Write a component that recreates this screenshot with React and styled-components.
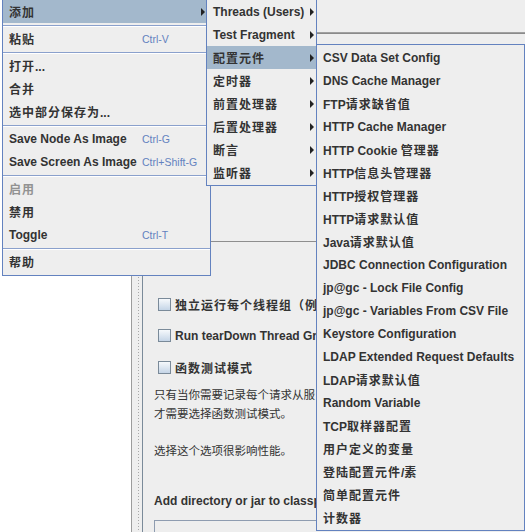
import React from "react";
import styled, { createGlobalStyle } from "styled-components";

const GlobalStyle = createGlobalStyle`
  *, *::before, *::after {
    box-sizing: border-box;
  }
  body {
    margin: 0;
    background: #ffffff;
    font-family: "Liberation Sans", "Noto Sans CJK SC", sans-serif;
    color: #333333;
    overflow: hidden;
  }
`;

const CJK = /([\u2e80-\u9fff\u3000-\u303f\uff00-\uffef]+)/;

function Txt({ children, plain }) {
  return children
    .split(CJK)
    .map((part, i) =>
      i % 2 === 1 ? (
        <Han key={i} $plain={plain}>
          {part}
        </Han>
      ) : (
        part
      )
    );
}

const mainMenu = [
  { label: "添加", sub: true, active: true },
  "sep",
  { label: "粘贴", key: "Ctrl-V" },
  "sep",
  { label: "打开..." },
  { label: "合并" },
  { label: "选中部分保存为..." },
  "sep",
  { label: "Save Node As Image", key: "Ctrl-G" },
  { label: "Save Screen As Image", key: "Ctrl+Shift-G" },
  "sep",
  { label: "启用", disabled: true },
  { label: "禁用" },
  { label: "Toggle", key: "Ctrl-T" },
  "sep",
  { label: "帮助" },
];

const addMenu = [
  { label: "Threads (Users)", sub: true },
  { label: "Test Fragment", sub: true },
  { label: "配置元件", sub: true, active: true },
  { label: "定时器", sub: true },
  { label: "前置处理器", sub: true },
  { label: "后置处理器", sub: true },
  { label: "断言", sub: true },
  { label: "监听器", sub: true },
];

const configMenu = [
  "CSV Data Set Config",
  "DNS Cache Manager",
  "FTP请求缺省值",
  "HTTP Cache Manager",
  "HTTP Cookie 管理器",
  "HTTP信息头管理器",
  "HTTP授权管理器",
  "HTTP请求默认值",
  "Java请求默认值",
  "JDBC Connection Configuration",
  "jp@gc - Lock File Config",
  "jp@gc - Variables From CSV File",
  "Keystore Configuration",
  "LDAP Extended Request Defaults",
  "LDAP请求默认值",
  "Random Variable",
  "TCP取样器配置",
  "用户定义的变量",
  "登陆配置元件/素",
  "简单配置元件",
  "计数器",
].map((label) => ({ label }));

function MenuList({ items, padRight }) {
  return items.map((item, i) =>
    item === "sep" ? (
      <Separator key={i} />
    ) : (
      <Item
        key={i}
        $active={item.active}
        $disabled={item.disabled}
        $padRight={padRight}
      >
        <Label>
          <Txt>{item.label}</Txt>
        </Label>
        {item.key && <Shortcut>{item.key}</Shortcut>}
        {item.sub && <Arrow />}
      </Item>
    )
  );
}

export default function App() {
  return (
    <>
      <GlobalStyle />
      <Screen>
        <Tree />
        <Splitter />
        <Panel>
          <TitleArea />
          <EtchedRule />
          <UpperArea />
          <Options>
            <CheckRow>
              <CheckBox />
              <Txt>独立运行每个线程组（例</Txt>
            </CheckRow>
            <CheckRow>
              <CheckBox />
              Run tearDown Thread Gro
            </CheckRow>
            <CheckRow>
              <CheckBox />
              <Txt>函数测试模式</Txt>
            </CheckRow>
            <Para>
              <Txt plain>只有当你需要记录每个请求从服</Txt>
              <br />
              <Txt plain>才需要选择函数测试模式。</Txt>
              <br />
              <br />
              <Txt plain>选择这个选项很影响性能。</Txt>
            </Para>
            <ClassPath>Add directory or jar to classp</ClassPath>
            <ListBox />
          </Options>
        </Panel>

        <Menu $left={2} $top={-1} $width={209} $pad="0 0 2px 0">
          <MenuList items={mainMenu} padRight={5} />
        </Menu>
        <Menu $left={206} $top={-1} $width={111} $pad="0 0 1px 0">
          <MenuList items={addMenu} padRight={2} />
        </Menu>
        <Menu $left={316} $top={44} $width={209} $pad="1px 0">
          <MenuList items={configMenu} padRight={4} />
        </Menu>
      </Screen>
    </>
  );
}

const Screen = styled.div`
  position: relative;
  width: 525px;
  height: 532px;
  display: flex;
  overflow: hidden;
  background: #ffffff;
`;

const Tree = styled.div`
  width: 131px;
  flex: none;
  background: #ffffff;
`;

const Splitter = styled.div`
  width: 12px;
  flex: none;
  background-color: #eeeeee;
  background-image: radial-gradient(circle, #a8a8a8 0.7px, transparent 1px);
  background-size: 3px 3px;
  background-position: 5px 0;
  background-repeat: repeat-y;
  border-left: 1px solid #9c9c9c;
  border-right: 1px solid #7a8a99;
`;

const Panel = styled.div`
  flex: 1;
  min-width: 0;
  display: flex;
  flex-direction: column;
  background: #eeeeee;
  overflow: hidden;
`;

const TitleArea = styled.div`
  height: 32px;
  flex: none;
`;

const EtchedRule = styled.div`
  height: 2px;
  flex: none;
  border-top: 1px solid #a0a0a0;
  border-bottom: 1px solid #8a8a8a;
`;

const UpperArea = styled.div`
  height: 208px;
  flex: none;
  border-bottom: 1px solid #8e8e8e;
`;

/* the visible part of the options column ends where the config submenu starts */
const Options = styled.div`
  width: 173px;
  flex: none;
  display: flex;
  flex-direction: column;
  align-items: flex-start;
  padding: 46.5px 0 0 11px;
  font-size: 12px;
  overflow: hidden;

  & > * {
    flex: none;
  }
`;

const CheckRow = styled.div`
  height: 31.5px;
  margin-left: 4px;
  display: flex;
  align-items: center;
  gap: 4px;
  font-weight: bold;
  white-space: nowrap;
`;

const CheckBox = styled.span`
  width: 13px;
  height: 13px;
  flex: none;
  border: 1px solid #7a8a99;
  background: linear-gradient(to bottom, #f6f9fc, #c5d5e7);
`;

const Para = styled.p`
  margin: 2px 0 0;
  line-height: 18px;
  font-size: 11.5px;
  white-space: nowrap;
`;

const ClassPath = styled.div`
  margin-top: 31.7px;
  line-height: 18px;
  font-weight: bold;
  white-space: nowrap;
`;

const ListBox = styled.div`
  align-self: stretch;
  margin-top: 10.3px;
  margin-right: -4px;
  height: 40px;
  border: 1px solid #8e9cb0;
  background: #eeeeee;
`;

const Han = styled.span`
  font-family: "Noto Sans CJK SC", sans-serif;
  font-size: ${(p) => (p.$plain ? "11.5px" : "12px")};
  letter-spacing: ${(p) => (p.$plain ? "0" : "1px")};
`;

const Menu = styled.div`
  position: absolute;
  left: ${(p) => p.$left}px;
  top: ${(p) => p.$top}px;
  width: ${(p) => p.$width}px;
  padding: ${(p) => p.$pad};
  background: #eeeeee;
  border: 1px solid #6382bf;
  z-index: 1;
`;

const Item = styled.div`
  height: 23px;
  display: flex;
  align-items: center;
  padding: 0 ${(p) => p.$padRight}px 0 6px;
  background: ${(p) => (p.$active ? "#a3b8cc" : "transparent")};
  color: ${(p) => (p.$disabled ? "#929292" : "#333333")};
  font-size: 12px;
  font-weight: bold;
  white-space: nowrap;
`;

const Label = styled.span`
  flex: 1;
  min-width: 0;
`;

const Shortcut = styled.span`
  width: 63px;
  flex: none;
  font-size: 10.5px;
  font-weight: normal;
  color: #6382bf;
`;

const Arrow = styled.span`
  width: 0;
  height: 0;
  flex: none;
  border-left: 4px solid #222222;
  border-top: 4px solid transparent;
  border-bottom: 4px solid transparent;
`;

const Separator = styled.div`
  height: 4px;
  padding-top: 2px;

  &::before {
    content: "";
    display: block;
    border-top: 1px solid #8aa0cc;
    border-bottom: 1px solid #ffffff;
  }
`;
